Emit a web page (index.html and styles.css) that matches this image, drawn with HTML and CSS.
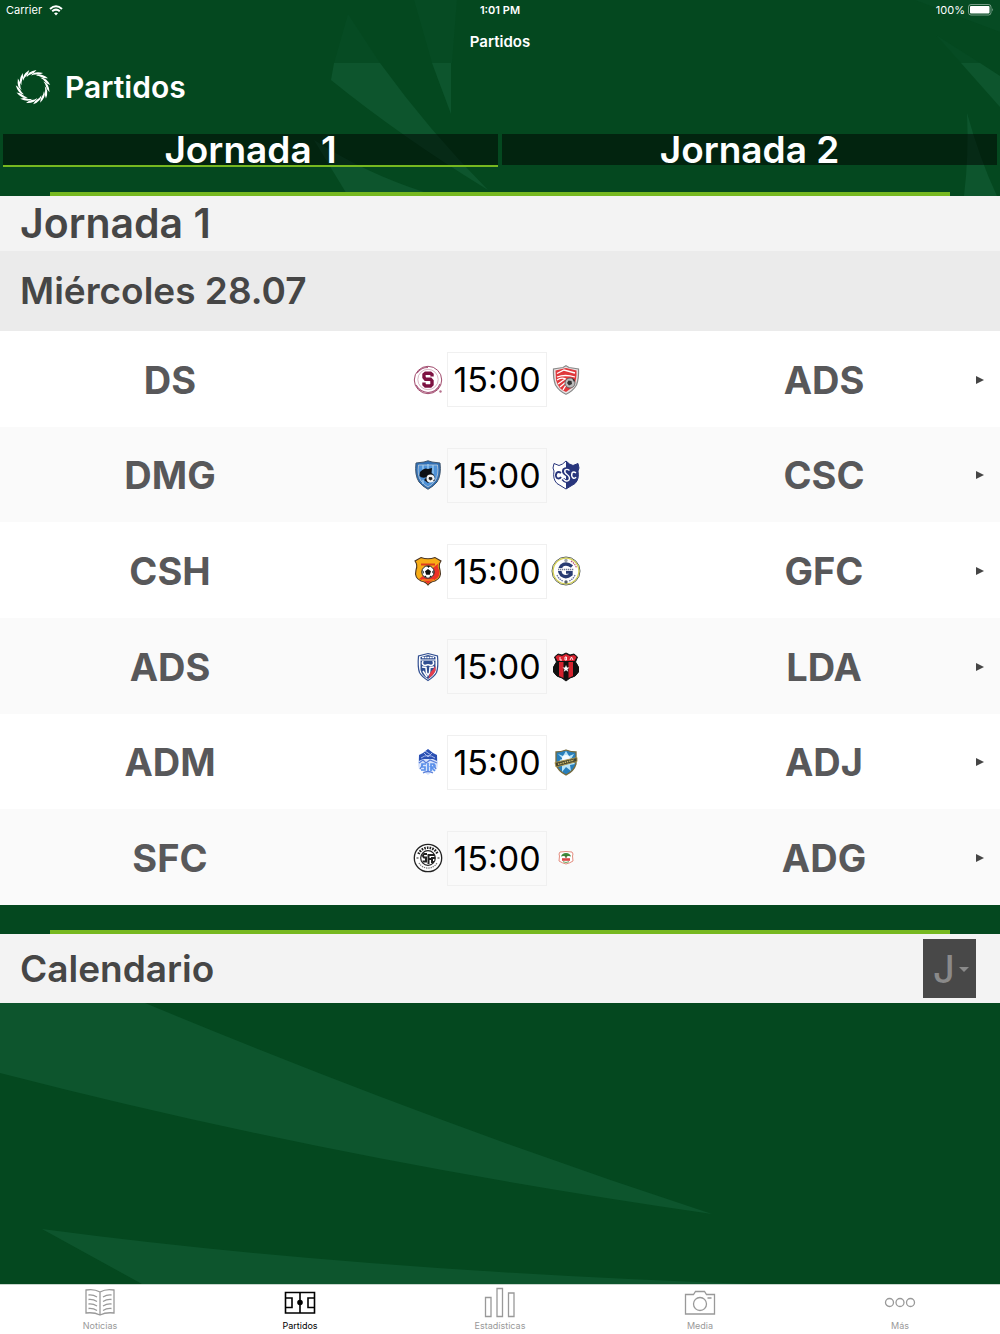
FILE: index.html
```html
<!DOCTYPE html>
<html lang="es">
<head>
<meta charset="utf-8">
<meta name="viewport" content="width=device-width, initial-scale=1">
<title>Partidos</title>
<link rel="stylesheet" href="styles.css">
</head>
<body>
<header class="top">
  <svg class="pattern" viewBox="0 0 1000 196" preserveAspectRatio="none" aria-hidden="true">
    <g class="ray-faint">
      <path d="M348 14L334 63H380Z"/>
      <path d="M414 0H457L452 63H432Z"/>
      <path d="M915 0H1000V32Z"/>
      <path d="M936 35L961 63H980Z"/>
    </g>
    <g class="ray">
      <path d="M334 63H380Q430 132 488 190Q400 136 331 80Z"/>
      <path d="M432 63H451V114Z"/>
      <path d="M314 140Q365 173 424 192L440 196H348Z"/>
      <path d="M961 63H980L1000 76V107Z"/>
      <path d="M967 113Q980 160 997 196H964Q969 155 967 113Z"/>
    </g>
  </svg>
  <div class="status">
    <span class="status-left">Carrier
      <svg width="14" height="11" viewBox="0 0 14 11" fill="none" stroke="#fff" stroke-width="2" aria-hidden="true"><path d="M1 4Q7-1.500 13 4M3.200 6.300Q7 3 10.800 6.300"/><path d="M5 8.200Q7 6.600 9 8.200L7 10.500Z" fill="#fff" stroke="none"/></svg>
    </span>
    <span class="status-time">1:01 PM</span>
    <span class="status-right">100%
      <svg width="26" height="12" viewBox="0 0 26 12" aria-hidden="true"><rect x=".5" y=".5" width="22.500" height="10.500" rx="2.500" fill="none" stroke="#fff" stroke-opacity=".45"/><rect x="2" y="2" width="19.500" height="7.500" rx="1" fill="#fff"/><path d="M24.300 4Q26 5.800 24.300 7.600Z" fill="#fff" opacity=".6"/></svg>
    </span>
  </div>
  <div class="navbar">Partidos</div>
  <div class="brand">
    <svg width="36" height="36" viewBox="-18 -18 36 36" fill="#fff" aria-hidden="true">
      <defs><path id="blade" d="M-6.500-9.800Q-5.500-15.500 3.500-17Q1-13.500-1.500-13Q-4.500-12-6.500-9.800Z"/></defs>
      <use href="#blade"/><use href="#blade" transform="rotate(24)"/><use href="#blade" transform="rotate(48)"/><use href="#blade" transform="rotate(72)"/><use href="#blade" transform="rotate(96)"/><use href="#blade" transform="rotate(120)"/><use href="#blade" transform="rotate(144)"/><use href="#blade" transform="rotate(168)"/><use href="#blade" transform="rotate(192)"/><use href="#blade" transform="rotate(216)"/><use href="#blade" transform="rotate(240)"/><use href="#blade" transform="rotate(264)"/><use href="#blade" transform="rotate(288)"/><use href="#blade" transform="rotate(312)"/><use href="#blade" transform="rotate(336)"/>
    </svg>
    <h1 class="brand-title">Partidos</h1>
  </div>
  <div class="rounds">
    <button class="round round-active" type="button">Jornada 1</button>
    <button class="round" type="button">Jornada 2</button>
  </div>
  <div class="accent"></div>
</header>

<main class="content">
  <h2 class="round-title">Jornada 1</h2>
  <h3 class="day-title">Miércoles 28.07</h3>
  <ul class="matches">
    <li><a class="match" href="#ds-ads"><span class="team">DS</span>
      <span class="score">
        <svg class="crest" viewBox="0 0 30 30" aria-hidden="true"><circle cx="15" cy="15" r="13.700" fill="#fff" stroke="#a04a6c" stroke-width="1"/><path d="M4 8Q8 2.500 15 2.500M3 20Q7 27 15 27.500Q24 27 27 19" fill="none" stroke="#a8557a" stroke-width="1.200"/><circle cx="15" cy="14.500" r="10.200" fill="#fff" stroke="#c795aa" stroke-width=".7"/><path d="M19 11.500V9.500L17.500 8.300H12.500L11 9.500V12.500L12.500 14.300H17.500L19 16V19.500L17.500 21H12.500L11 19.500V17.500" fill="none" stroke="#7d1141" stroke-width="3.400"/><circle cx="27.500" cy="26.500" r="1.200" fill="#b5708d"/></svg>
        <span class="time">15:00</span>
        <svg class="crest" viewBox="0 0 30 30" aria-hidden="true"><path d="M15 .8L18 2.500L27.500 4Q28 13 25.500 20Q22 26 15 29.300Q8 26 4.500 20Q2 13 2.500 4L12 2.500Z" fill="#e8e3e3" stroke="#888" stroke-width="1.200"/><path d="M4.500 5.500L15 3L25.500 5.500Q26 15 22.500 21.500L15 27Q7 24 5 15Z" fill="#e0383c"/><path d="M6 8.500L13 5L24 8M6 12Q14 9 24 12M6 15Q10 12 15 14M7 19L14 14M9 22L15 17M12 25L15 20" fill="none" stroke="#fff" stroke-width="1.300"/><circle cx="19" cy="18" r="5" fill="#bbb" stroke="#555" stroke-width=".8"/><path d="M17.500 15.500l3 .5.500 3-3 1.500-2-2.500zM21 13l3 2-1 2z" fill="#333"/></svg>
      </span><span class="team">ADS</span>
      <svg class="arrow" viewBox="0 0 8 8" aria-hidden="true"><path d="M0 0L8 4L0 8Z"/></svg></a></li>
    <li><a class="match" href="#dmg-csc"><span class="team">DMG</span>
      <span class="score">
        <svg class="crest" viewBox="0 0 30 30" aria-hidden="true"><path d="M15 .8L19 2L27 3Q28.500 15 24 22Q21 26 15 29.300Q9 26 6 22Q1.500 15 3 3L11 2Z" fill="#2f6fb5" stroke="#42566d"/><path d="M5.500 5H24.500Q26 15 22 21Q19 25 15 27Q11 25 8 21Q4 15 5.500 5Z" fill="#4d91d7" stroke="#c7ced6" stroke-width=".8"/><path d="M10 5V11M15 4V9M20 5V14M10 20V24" stroke="#9ccbf0" stroke-width="1.300"/><path d="M7 12Q11 7 15 9L19 8L18.500 13Q22 15 21.500 18L15 23L11 20L14 17Q9 19 6.500 16Z" fill="#0c1016"/><circle cx="17.500" cy="18.500" r="4" fill="#f2f2f2"/><path d="M16 17l3 .3.500 2-2.200 1.200-1.700-1.500zM20 21l1.500-2v2z" fill="#222"/></svg>
        <span class="time">15:00</span>
        <svg class="crest" viewBox="0 0 30 30" aria-hidden="true"><path d="M15 1L18.500 4L22 5.500L27 3.500L28 8L27 11Q28.500 19 24 23.500L15 29L6 23.500Q1.500 19 3 11L2 8L3 3.500L8 5.500L11.500 4Z" fill="#fff" stroke="#28357c"/><path d="M15 1L18.500 4L22 5.500L27 3.500L28 8L27 11Q28.500 19 24 23.500L15 29Z" fill="#28357c"/><path d="M10 13Q7.500 11 5.500 13Q4 16 6 18Q8.500 19.500 10 17" fill="none" stroke="#28357c" stroke-width="1.800"/><path d="M18 10.500Q15.500 8 13 10Q12 12.500 15.500 14.500Q19.500 17 18 20Q14.500 22.500 12 19" fill="none" stroke="#28357c" stroke-width="3.600"/><path d="M18.500 10.500Q16 8.500 14 10Q13 12.500 16 14.500Q19.500 17 18 20Q15 22.500 12.500 19M25 13Q22.500 11 21 13Q20 16 22 18Q24 19 25 17" fill="none" stroke="#fff" stroke-width="1.400"/></svg>
      </span><span class="team">CSC</span>
      <svg class="arrow" viewBox="0 0 8 8" aria-hidden="true"><path d="M0 0L8 4L0 8Z"/></svg></a></li>
    <li><a class="match" href="#csh-gfc"><span class="team">CSH</span>
      <span class="score">
        <svg class="crest" viewBox="0 0 30 30" aria-hidden="true"><path d="M8 1.500Q15 4 22 1.500L28 5Q25 9 27 14Q29 22 22 25Q17 26 15 29Q13 26 8 25Q1 22 3 14Q5 9 2 5Z" fill="#f8ad17" stroke="#4b3523" stroke-width="1.100"/><path d="M26 7Q23.500 10 26 14Q28 21 21.500 24Q17 25 15 28Q12.500 25 6 23Z" fill="#ed3127"/><path d="M8 8.500H22" stroke="#dc3c20" stroke-width="2"/><circle cx="15" cy="16" r="6.200" fill="#fff" stroke="#222"/><path d="M15 13l3 2.200-1.200 3.500h-3.600L12 15.200zM14 10h3l-1.500 2zM9.500 14l1.500 2-1 2zM20.500 14L19 16l1.500 2zM11 20l2-.300.500 2zM19 20l-2-.300-.500 2z" fill="#111"/><path d="M9 24H21" stroke="#f8ad17"/></svg>
        <span class="time">15:00</span>
        <svg class="crest" viewBox="0 0 30 30" aria-hidden="true"><circle cx="15" cy="15" r="14" fill="#fff" stroke="#52595d"/><circle cx="15" cy="15" r="12.900" fill="#fff" stroke="#d5d154" stroke-width="1.300"/><path d="M6 19Q8 23.500 12 25M24 19Q22 23.500 18 25" fill="none" stroke="#6b75a0" stroke-width="1.300" stroke-dasharray="1.500 .8"/><path d="M21 10.500Q15 6 10.500 9.800Q7 15 10.500 19Q15 22.500 20 18.500V16H15" fill="none" stroke="#283b72" stroke-width="3.400"/><path d="M6.500 13.500H23.500" stroke="#fff" stroke-width="2.800"/><path d="M7 13.500H23" stroke="#6f7993" stroke-width="1.300" stroke-dasharray="1.300 .7"/><path d="M20 5Q24.500 8 25.500 12" fill="none" stroke="#b75270" stroke-width="1.200" stroke-dasharray="1.500 .8"/><circle cx="15" cy="4.500" r="1.700" fill="#a0a6aa"/><circle cx="15" cy="26" r="1.700" fill="#566067"/></svg>
      </span><span class="team">GFC</span>
      <svg class="arrow" viewBox="0 0 8 8" aria-hidden="true"><path d="M0 0L8 4L0 8Z"/></svg></a></li>
    <li><a class="match" href="#ads-lda"><span class="team">ADS</span>
      <span class="score">
        <svg class="crest" viewBox="0 0 30 30" aria-hidden="true"><path d="M15 1.500L24.500 4Q25.500 15 23.500 20.500Q21 25 15 28.500Q9 25 6.500 20.500Q4.500 15 5.500 4Z" fill="#fff" stroke="#304e91" stroke-width="1.200"/><path d="M7.500 5L15 3L22.500 5V7.500H7.500Z" fill="#304e91"/><path d="M9 5.500H21" stroke="#fff" stroke-width="1.400" stroke-dasharray="2 .6"/><path d="M7.500 8.500H22.500V18Q20.500 24 15 27Q9 24 7.500 18Z" fill="#304e91"/><path d="M10 9Q8 13 12.500 13.500Q15 12 17.500 13.500Q22 13 20 9" fill="none" stroke="#fff" stroke-width="1.600"/><path d="M9 15L13 15.500L13.500 21L15 23L16.500 21L17 15.500L21 15M10 19L14 25" fill="none" stroke="#fff" stroke-width="1.500"/><path d="M22.500 14V19Q20 24 15.500 26.500L17 21Z" fill="#e53c4b"/></svg>
        <span class="time">15:00</span>
        <svg class="crest" viewBox="0 0 30 30" aria-hidden="true"><path d="M3.500 5L7 2L11 3L15 1L19 3L23 2L26.500 5L24.500 10Q29 15 27.500 20Q25 25 19 26L15 29L11 26Q5 25 2.500 20Q1 15 5.500 10Z" fill="#111" stroke="#111"/><path d="M4.500 5L7 3L11 4L15 2L19 4L23 3L25.500 5L23.500 9H6.500Z" fill="#da2330"/><path d="M8 10H12.500V26L8 24ZM17.500 10H22V24L17.500 26Z" fill="#d5222e"/><path d="M9 5V8H11M14 5H15.500V8H14ZM19 8L20.500 5L22 8" fill="none" stroke="#fff" stroke-width=".9"/><path d="M15 13l1 2.400 2.500.1-2 1.700.7 2.600-2.200-1.500-2.200 1.500.7-2.600-2-1.700 2.500-.1z" fill="#fff"/></svg>
      </span><span class="team">LDA</span>
      <svg class="arrow" viewBox="0 0 8 8" aria-hidden="true"><path d="M0 0L8 4L0 8Z"/></svg></a></li>
    <li><a class="match" href="#adm-adj"><span class="team">ADM</span>
      <span class="score">
        <svg class="crest" viewBox="0 0 30 30" aria-hidden="true"><path d="M15 2L20 6L24 8Q26 15 24 22L19 25L15 28L11 25L6 22Q4 15 6 8L10 6Z" fill="#d8e3fb"/><path d="M15 2L20 6L24 8V14L20 12H10L6 14V8L10 6Z" fill="#2b50b3"/><path d="M8 11Q15 6 22 11M11 6L15 10L19 6M12 4L18 8" fill="none" stroke="#a6b9eb"/><path d="M6 16L10 13L13 16L17 13L24 16M7 22L10 17M20 17L23 22M10 26Q15 23 20 26" fill="none" stroke="#597fd9" stroke-width="1.300"/><path d="M13 17H9V20H12V23H8M15 16V24M18 24V17H21Q23 19 21 20H18L22 24" fill="none" stroke="#5a91eb" stroke-width="1.700"/></svg>
        <span class="time">15:00</span>
        <svg class="crest" viewBox="0 0 30 30" aria-hidden="true"><path d="M5 5Q10 5 15 3Q20 5 25 5V17Q23 24 15 28Q7 24 5 17Z" fill="#287fbb" stroke="#766a3d" stroke-width="1.300"/><path d="M15 15L7 7L12 9L15 4L18 9L23 7L20 12L24 17L19 18L20 24L15 20L11 25V18L6 17L10 12Z" fill="#b9e4f7"/><circle cx="15" cy="12" r="4" fill="#f5fbff"/><path d="M4 15.500L26 10.500V14.500L5 20Z" fill="#434330" stroke="#af9648" stroke-width=".9"/><path d="M7 17.300L23 13" stroke="#d0bd68" stroke-width="1.400" stroke-dasharray="1.500 .8"/></svg>
      </span><span class="team">ADJ</span>
      <svg class="arrow" viewBox="0 0 8 8" aria-hidden="true"><path d="M0 0L8 4L0 8Z"/></svg></a></li>
    <li><a class="match" href="#sfc-adg"><span class="team">SFC</span>
      <span class="score">
        <svg class="crest" viewBox="0 0 30 30" aria-hidden="true"><circle cx="15" cy="15" r="13.700" fill="#fff" stroke="#222" stroke-width="1.300"/><path d="M5.500 11A10.300 10.300 0 0 1 24.500 11" fill="none" stroke="#222" stroke-width="2.600" stroke-dasharray="1.600 1.100"/><path d="M6 20A10.500 10.500 0 0 0 24 20" fill="none" stroke="#777" stroke-width="1.300" stroke-dasharray="1.300 .9"/><path d="M3.500 15H5.500M24.500 15H26.500" stroke="#222" stroke-width="1.200"/><circle cx="15" cy="15" r="7.300" fill="#fff" stroke="#222" stroke-width="1.200"/><path d="M14 11H11Q9 12.500 11 14.500H13V18.500H9.500M15.500 21V12H21M15.500 16H18M22 15H19V19H21" fill="none" stroke="#222" stroke-width="2"/></svg>
        <span class="time">15:00</span>
        <svg class="crest" viewBox="0 0 30 30" aria-hidden="true"><path d="M9 9Q15 8 21 9L22 11L21.500 13L22 18Q19 20 15 21Q11 20 8 18L8.500 13L8 11Z" fill="#fff" stroke="#e48d80"/><path d="M10 13.500Q11 10 15 10Q19 10 20 13.500Q17 12.500 15 14Q13 12.500 10 13.500Z" fill="#3c883b"/><path d="M15 12V15" stroke="#49672f" stroke-width="1.200"/><path d="M11 16.500H19" stroke="#da4747" stroke-width="2.600"/><path d="M12 18.700L15 19.500L18 18.700" fill="none" stroke="#6aa35d"/></svg>
      </span><span class="team">ADG</span>
      <svg class="arrow" viewBox="0 0 8 8" aria-hidden="true"><path d="M0 0L8 4L0 8Z"/></svg></a></li>
  </ul>

  <div class="accent accent-gap"></div>
  <section class="calendar">
    <h2 class="calendar-title">Calendario</h2>
    <div class="picker">
      <select class="picker-select" aria-label="Jornada"><option>J</option></select>
      <svg class="picker-caret" viewBox="0 0 10 5" aria-hidden="true"><path d="M0 0H10L5 5Z"/></svg>
    </div>
  </section>
</main>

<div class="backdrop">
  <svg class="pattern" viewBox="0 0 1000 281" preserveAspectRatio="none" aria-hidden="true">
    <g class="ray"><path d="M0 0H145Q428 118 712 211Q336 157 0 70Z"/><path d="M42 226Q350 267 750 281H142Z"/></g>
  </svg>
</div>

<nav class="tabbar">
  <a class="tab" href="#noticias">
    <svg class="tab-icon" viewBox="0 0 32 32" aria-hidden="true"><path d="M16 5Q10 1.500 2 3V26Q10 25 16 28Q22 25 30 26V3Q22 1.500 16 5V28M4.500 8Q9 7.500 13 10M4.500 12.500Q9 12 13 14.500M4.500 17Q9 16.500 13 19M4.500 21.500Q9 21 13 23.500M27.500 8Q23 7.500 19 10M27.500 12.500Q23 12 19 14.500M27.500 17Q23 16.500 19 19M27.500 21.500Q23 21 19 23.500"/></svg>
    <span>Noticias</span></a>
  <a class="tab tab-active" href="#partidos">
    <svg class="tab-icon" viewBox="0 0 32 32" aria-hidden="true"><path d="M1.500 5.500H30.500V26H1.500ZM16 5.500V26M1.500 11H8V20.500H1.500M30.500 11H24V20.500H30.500"/><circle cx="16" cy="15.500" r="2" fill="currentColor"/></svg>
    <span>Partidos</span></a>
  <a class="tab" href="#estadisticas">
    <svg class="tab-icon" viewBox="0 0 32 32" aria-hidden="true"><path d="M1.500 10.500H7V29.500H1.500ZM13 1.500H18.500V29.500H13ZM24.500 6H30V29.500H24.500Z"/></svg>
    <span>Estadísticas</span></a>
  <a class="tab" href="#media">
    <svg class="tab-icon" viewBox="0 0 32 32" aria-hidden="true"><path d="M1.500 7.500H9.500L11.500 4.500H20.500L22.500 7.500H30.500V27H1.500ZM23.500 11H27.500"/><circle cx="16" cy="17" r="6.500"/></svg>
    <span>Media</span></a>
  <a class="tab" href="#mas">
    <svg class="tab-icon" viewBox="0 0 32 32" aria-hidden="true"><circle cx="5.500" cy="15.500" r="4"/><circle cx="16" cy="15.500" r="4"/><circle cx="26.500" cy="15.500" r="4"/></svg>
    <span>Más</span></a>
</nav>
</body>
</html>
```
FILE: styles.css
```css
* {
  box-sizing: border-box;
}

body {
  margin: 0;
  min-height: 100vh;
  display: flex;
  flex-direction: column;
  background: #04481f;
  color: #464646;
  font-family: Inter, "Liberation Sans", sans-serif;
}

h1,
h2,
h3 {
  margin: 0;
  font-weight: 600;
}

a {
  color: inherit;
  text-decoration: none;
}

.top,
.backdrop {
  position: relative;
  isolation: isolate;
}

.pattern {
  position: absolute;
  inset: 0;
  z-index: -1;
  width: 100%;
  height: 100%;
}

.ray {
  fill: #0d552d;
}

.ray-faint {
  fill: #064b23;
}

.top {
  color: #fff;
}

.status {
  display: grid;
  grid-template-columns: 1fr auto 1fr;
  align-items: center;
  height: 20px;
  padding: 0 6px;
  font-size: 11px;
}

.status-left,
.status-right {
  display: flex;
  align-items: center;
  gap: 7px;
}

.status-right {
  justify-content: flex-end;
  gap: 3px;
}

.status-time {
  font-weight: 600;
}

.navbar {
  height: 43px;
  line-height: 43px;
  text-align: center;
  font-size: 15px;
  font-weight: 600;
}

.brand {
  display: flex;
  align-items: center;
  gap: 14px;
  height: 47px;
  padding-left: 15px;
}

.brand-title {
  font-size: 30px;
}

.rounds {
  display: grid;
  grid-template-columns: 1fr 1fr;
  gap: 4px;
  margin-top: 24px;
  padding: 0 3px;
}

.round {
  height: 33px;
  padding: 0;
  border: 0;
  border-bottom: 2px solid transparent;
  background: rgba(0, 0, 0, 0.5);
  background-clip: padding-box;
  color: #fff;
  font: 600 37px/32px Inter, "Liberation Sans", sans-serif;
}

.round-active {
  border-bottom-color: #76b820;
}

.accent {
  height: 4px;
  margin: 25px 5% 0;
  background: #76b820;
}

.round-title {
  padding-left: 20px;
  background: #f3f3f3;
  font-size: 41px;
  line-height: 55px;
}

.day-title {
  padding-left: 20px;
  background: #ebebeb;
  font-size: 37px;
  line-height: 80px;
}

.matches {
  display: grid;
  grid-auto-rows: 1fr;
  min-height: 574px;
  margin: 0;
  padding: 0;
  list-style: none;
  background: #fff;
}

.matches li {
  display: grid;
}

.matches li:nth-child(even) {
  background: #fafafa;
}

.match {
  display: grid;
  grid-template-columns: 1fr 350px 1fr 8px;
  align-items: center;
  padding: 2px 16px 0 18px;
}

.team {
  text-align: center;
  color: #58585a;
  font-size: 38px;
  font-weight: 700;
}

.score {
  display: flex;
  align-items: center;
  justify-content: center;
  gap: 4px;
}

.crest {
  width: 30px;
  height: 30px;
}

.time {
  width: 100px;
  border: 1px solid #f0f0f0;
  color: #000;
  font-size: 34px;
  line-height: 53px;
  text-align: center;
}

.arrow {
  width: 8px;
  height: 8px;
  fill: #454545;
}

.accent-gap {
  margin-top: 25px;
}

.calendar {
  display: flex;
  align-items: center;
  justify-content: space-between;
  height: 69px;
  padding: 0 24px 0 20px;
  background: #f3f3f3;
}

.calendar-title {
  font-size: 37px;
}

.picker {
  position: relative;
}

.picker-select {
  display: block;
  width: 53px;
  height: 59px;
  padding: 0 0 0 10px;
  border: 0;
  border-radius: 0;
  appearance: none;
  background: #484848;
  color: #8a8a8a;
  font: 500 38px Inter, "Liberation Sans", sans-serif;
}

.picker-caret {
  position: absolute;
  top: 28px;
  right: 7px;
  width: 10px;
  height: 5px;
  fill: #8a8a8a;
  pointer-events: none;
}

.backdrop {
  flex: 1;
}

.tabbar {
  display: grid;
  grid-template-columns: repeat(5, 1fr);
  height: 50px;
  border-top: 1px solid #c8d5cc;
  background: #fff;
}

.tab {
  display: flex;
  flex-direction: column;
  align-items: center;
  padding-top: 2px;
  color: #999;
  font-size: 9px;
  line-height: 14px;
}

.tab-active {
  color: #000;
}

.tab-icon {
  width: 32px;
  height: 32px;
  fill: none;
  stroke: currentColor;
  stroke-width: 1.3;
}

.tab-active .tab-icon {
  stroke-width: 1.6;
}
```
